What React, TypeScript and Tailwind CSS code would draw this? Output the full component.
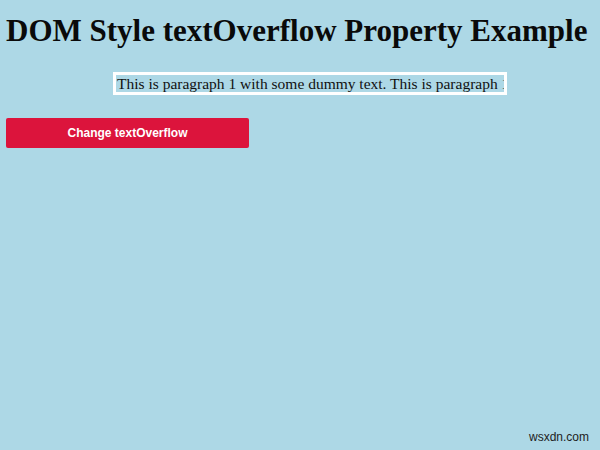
import React from "react";

export default function App() {
  return (
    <div className="relative min-h-screen w-full bg-[#add8e6] pl-[6px] pt-[13px]">
      <h1 className="m-0 whitespace-nowrap font-['Liberation_Serif','Times_New_Roman',serif] text-[31px] font-bold leading-[normal] text-[#0a0a0a]">
        DOM Style textOverflow Property Example
      </h1>
      <p className="ml-[107px] mt-[23px] w-[394px] overflow-hidden text-clip whitespace-nowrap border-[3px] border-white pl-[1px] font-['Liberation_Serif','Times_New_Roman',serif] text-[15.5px] leading-[17px] text-[#111]">
        This is paragraph 1 with some dummy text. This is paragraph 1 with some dummy text. This is paragraph 1 with some dummy text.
      </p>
      <button className="mt-[23px] flex h-[30px] w-[243px] items-center justify-center rounded-[2px] bg-[#dc143c] font-['Liberation_Sans',Arial,sans-serif] text-[12px] font-bold text-white">
        Change textOverflow
      </button>
      <div className="absolute bottom-[4px] right-[11px] font-['Liberation_Sans',Arial,sans-serif] text-[12px] text-[#222]">
        wsxdn.com
      </div>
    </div>
  );
}
